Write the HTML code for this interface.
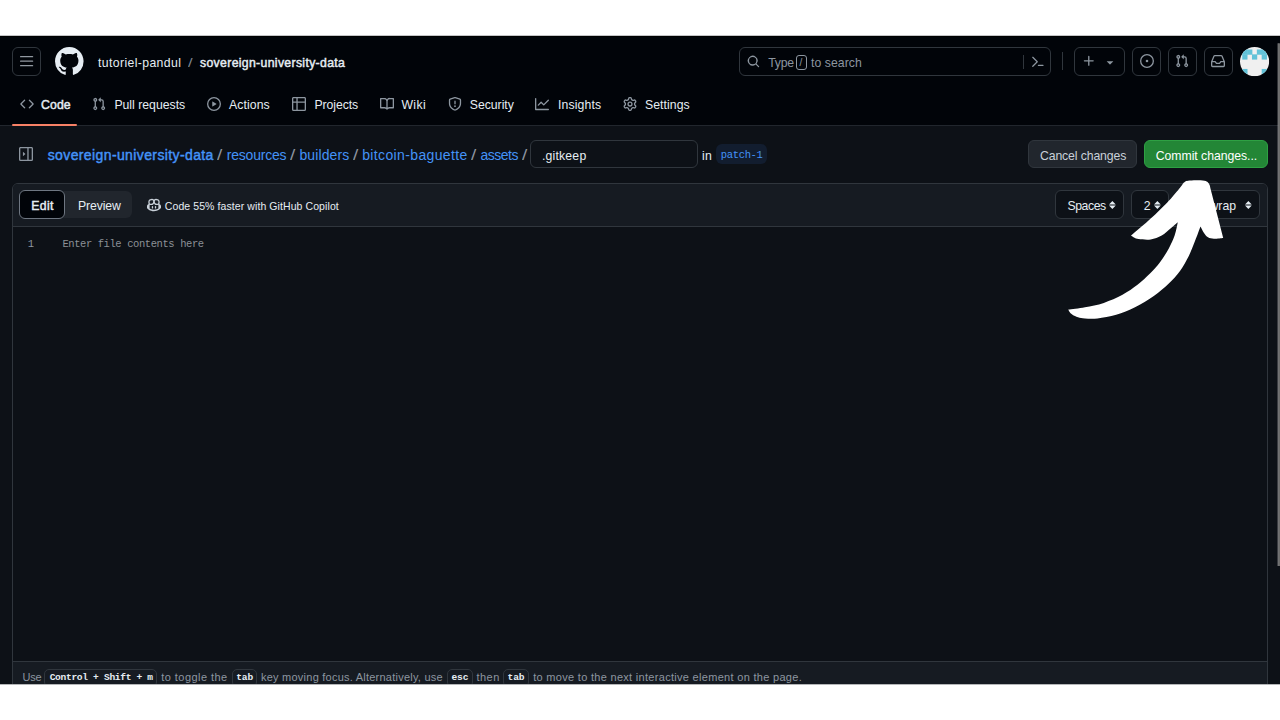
<!DOCTYPE html>
<html lang="en">
<head>
<meta charset="utf-8">
<title>Editing .gitkeep</title>
<style>
*{box-sizing:border-box;margin:0;padding:0}
html,body{width:1280px;height:720px;overflow:hidden;background:#fff}
body{font-family:"Liberation Sans",sans-serif;font-size:12.25px;color:#e6edf3;position:relative}
.t{position:absolute;white-space:nowrap;line-height:16px;display:block}
kbd,code{font-family:inherit}
#page{position:absolute;left:0;top:36px;width:1280px;height:648px;background:#0d1117}
#hdr{position:absolute;left:0;top:36px;width:1280px;height:90px;background:#010409;border-bottom:1px solid #21262d}
.box{position:absolute;border:1px solid #30363d;border-radius:6px}
svg{position:absolute;overflow:visible}
.b{-webkit-text-stroke:0.45px currentColor}
.bc{color:#4493f8;font-size:14px}
.sep{color:#8d96a0;font-size:14px;transform:scaleX(1.35);transform-origin:left}
.m{color:#8d96a0}
.mono{font-family:"Liberation Mono",monospace}
.kbd{position:absolute;border:1px solid #30363d;border-radius:5px;background:#161b22;height:18px;top:669px}
.k{font-family:"Liberation Mono",monospace;font-weight:bold;font-size:9.6px;color:#e6edf3}
.f{color:#8d96a0;font-size:11px}
</style>
</head>
<body>
<div id="page"></div><div id="hdr"></div><div style="position:absolute;left:0;top:36px;width:1280px;height:1px;background:#000"></div>
<header>
<div class="box" style="left:12px;top:47px;width:29px;height:29px"></div>
<svg style="left:19.9px;top:55.8px" width="13.2" height="10.4" viewBox="0 0 13.2 10.4" fill="#9198a1"><rect x="0" y="0" width="13.2" height="1.35" rx=".6"/><rect x="0" y="4.5" width="13.2" height="1.35" rx=".6"/><rect x="0" y="9" width="13.2" height="1.35" rx=".6"/></svg>
<svg style="left:54.7px;top:46.6px" width="28.6" height="28.6" viewBox="0 0 16 16" fill="#e6edf3"><path d="M8 0c4.42 0 8 3.58 8 8a8.013 8.013 0 0 1-5.45 7.59c-.4.08-.55-.17-.55-.38 0-.27.01-1.13.01-2.2 0-.75-.25-1.23-.54-1.48 1.78-.2 3.65-.88 3.65-3.95 0-.88-.31-1.59-.82-2.15.08-.2.36-1.02-.08-2.12 0 0-.67-.22-2.2.82-.64-.18-1.32-.27-2-.27-.68 0-1.36.09-2 .27-1.53-1.03-2.2-.82-2.2-.82-.44 1.1-.16 1.92-.08 2.12-.51.56-.82 1.28-.82 2.15 0 3.06 1.86 3.75 3.64 3.95-.23.2-.44.55-.51 1.07-.46.21-1.61.55-2.33-.66-.15-.24-.6-.83-1.23-.82-.67.01-.27.38.01.53.34.19.73.9.82 1.13.16.45.68 1.31 2.69.94 0 .67.01 1.3.01 1.49 0 .21-.15.45-.55.38A7.995 7.995 0 0 1 0 8c0-4.42 3.58-8 8-8Z"/></svg>
<a class="t " id="h1" style="left:98px;top:55.3px;letter-spacing:0.377px;">tutoriel-pandul</a>
<span class="t " id="h2" style="left:187.8px;top:55.3px;color:#7d8590;transform:scaleX(1.35);transform-origin:left;">/</span>
<a class="t b" id="h3" style="left:200px;top:55.3px;letter-spacing:0.334px;">sovereign-university-data</a>
<div class="box" style="left:739px;top:47px;width:312px;height:29px"></div>
<svg style="left:747px;top:55px" width="13" height="13" viewBox="0 0 16 16" fill="#8d96a0"><path d="M10.68 11.74a6 6 0 0 1-7.922-8.982 6 6 0 0 1 8.982 7.922l3.04 3.04a.749.749 0 0 1-.326 1.275.749.749 0 0 1-.734-.215ZM11.5 7a4.499 4.499 0 1 0-8.997 0A4.499 4.499 0 0 0 11.5 7Z"/></svg>
<span class="t m" id="s1" style="left:768.3px;top:54.5px;letter-spacing:-0.266px;">Type</span>
<div class="box" style="left:796.4px;top:55px;width:11px;height:14.5px;border-radius:3px;border-color:#8d96a0"></div>
<span class="t m" id="s2" style="left:799.5px;top:54.8px;font-size:10px;">/</span>
<span class="t m" id="s3" style="left:811px;top:54.5px;letter-spacing:0.045px;">to search</span>
<div style="position:absolute;left:1022.6px;top:54.6px;width:1px;height:14.2px;background:#30363d"></div>
<svg style="left:1030.6px;top:54.5px" width="13.5" height="13.5" viewBox="0 0 16 16" fill="#8d96a0"><path d="m6.354 8.04-4.773 4.773a.75.75 0 1 0 1.061 1.06L7.945 8.57a.75.75 0 0 0 0-1.06L2.642 2.206a.75.75 0 0 0-1.06 1.061L6.353 8.04ZM8.75 11.5a.75.75 0 0 0 0 1.5h5.5a.75.75 0 0 0 0-1.5h-5.5Z"/></svg>
<div style="position:absolute;left:1062.2px;top:52.4px;width:1px;height:17.6px;background:#30363d"></div>
<div class="box" style="left:1074px;top:47px;width:51px;height:29px"></div>
<svg style="left:1082px;top:54px" width="14" height="14" viewBox="0 0 16 16" fill="#8d96a0"><path d="M7.75 2a.75.75 0 0 1 .75.75V7h4.25a.75.75 0 0 1 0 1.5H8.5v4.25a.75.75 0 0 1-1.5 0V8.5H2.75a.75.75 0 0 1 0-1.5H7V2.75A.75.75 0 0 1 7.75 2Z"/></svg>
<svg style="left:1103px;top:54.5px" width="14" height="14" viewBox="0 0 16 16" fill="#8d96a0"><path d="m4.427 7.427 3.396 3.396a.25.25 0 0 0 .354 0l3.396-3.396A.25.25 0 0 0 11.396 7H4.604a.25.25 0 0 0-.177.427Z"/></svg>
<div class="box" style="left:1132px;top:47px;width:29px;height:29px"></div>
<svg style="left:1139.7px;top:54.3px" width="14" height="14" viewBox="0 0 16 16" fill="#8d96a0"><path d="M8 9.5a1.5 1.5 0 1 0 0-3 1.5 1.5 0 0 0 0 3ZM8 0a8 8 0 1 1 0 16A8 8 0 0 1 8 0ZM1.5 8a6.5 6.5 0 1 0 13 0 6.5 6.5 0 0 0-13 0Z"/></svg>
<div class="box" style="left:1168px;top:47px;width:29px;height:29px"></div>
<svg style="left:1175.3px;top:54.3px" width="14" height="14" viewBox="0 0 16 16" fill="#8d96a0"><path d="M1.5 3.25a2.25 2.25 0 1 1 3 2.122v5.256a2.251 2.251 0 1 1-1.5 0V5.372A2.25 2.25 0 0 1 1.5 3.25Zm5.677-.177L9.573.677A.25.25 0 0 1 10 .854V2.5h1A2.5 2.5 0 0 1 13.5 5v5.628a2.251 2.251 0 1 1-1.5 0V5a1 1 0 0 0-1-1h-1v1.646a.25.25 0 0 1-.427.177L7.177 3.427a.25.25 0 0 1 0-.354ZM3.75 2.5a.75.75 0 1 0 0 1.5.75.75 0 0 0 0-1.5Zm0 9.5a.75.75 0 1 0 0 1.5.75.75 0 0 0 0-1.5Zm8.25.75a.75.75 0 1 0 1.5 0 .75.75 0 0 0-1.5 0Z"/></svg>
<div class="box" style="left:1204px;top:47px;width:29px;height:29px"></div>
<svg style="left:1211.3px;top:54.3px" width="14" height="14" viewBox="0 0 16 16" fill="#8d96a0"><path d="M2.8 2.06A1.75 1.75 0 0 1 4.41 1h7.18c.7 0 1.333.417 1.61 1.06l2.74 6.395c.04.093.06.194.06.295v4.5A1.75 1.75 0 0 1 14.25 15H1.75A1.75 1.75 0 0 1 0 13.25v-4.5c0-.101.02-.202.06-.295Zm1.61.44a.25.25 0 0 0-.23.152L1.887 8H4.75a.75.75 0 0 1 .6.3L6.625 10h2.75l1.275-1.7a.75.75 0 0 1 .6-.3h2.863L11.82 2.652a.25.25 0 0 0-.23-.152Zm10.09 7h-2.875l-1.275 1.7a.75.75 0 0 1-.6.3h-3.5a.75.75 0 0 1-.6-.3L4.375 9.5H1.5v3.75c0 .138.112.25.25.25h12.5a.25.25 0 0 0 .25-.25Z"/></svg>
<svg style="left:1239.5px;top:46.7px" width="29.2" height="29.2" viewBox="0 0 30 30"><defs><clipPath id="avc"><circle cx="15" cy="15" r="15"/></clipPath></defs><g clip-path="url(#avc)"><rect width="30" height="30" fill="#f0f0f0"/><g fill="#62c2d8"><rect x="2.3" y="2.55" width="5.4" height="5.4"/><rect x="7.3" y="2.55" width="5.4" height="5.4"/><rect x="17.3" y="2.55" width="5.4" height="5.4"/><rect x="22.3" y="2.55" width="5.4" height="5.4"/><rect x="2.3" y="7.55" width="5.4" height="5.4"/><rect x="12.3" y="7.55" width="5.4" height="5.4"/><rect x="22.3" y="7.55" width="5.4" height="5.4"/><rect x="2.3" y="22.55" width="5.4" height="5.4"/><rect x="22.3" y="22.55" width="5.4" height="5.4"/></g></g></svg>
<nav>
<svg style="left:19.5px;top:97px" width="14" height="14" viewBox="0 0 16 16" fill="#8d96a0"><path d="m11.28 3.22 4.25 4.25a.75.75 0 0 1 0 1.06l-4.25 4.25a.749.749 0 0 1-1.275-.326.749.749 0 0 1 .215-.734L13.94 8l-3.72-3.72a.749.749 0 0 1 .326-1.275.749.749 0 0 1 .734.215Zm-6.56 0a.751.751 0 0 1 1.042.018.751.751 0 0 1 .018 1.042L2.06 8l3.72 3.72a.749.749 0 0 1-.326 1.275.749.749 0 0 1-.734-.215L.47 8.53a.75.75 0 0 1 0-1.06Z"/></svg>
<a class="t b" id="n0" style="left:41px;top:97.1px;letter-spacing:0.126px;">Code</a>
<svg style="left:92px;top:97px" width="14" height="14" viewBox="0 0 16 16" fill="#8d96a0"><path d="M1.5 3.25a2.25 2.25 0 1 1 3 2.122v5.256a2.251 2.251 0 1 1-1.5 0V5.372A2.25 2.25 0 0 1 1.5 3.25Zm5.677-.177L9.573.677A.25.25 0 0 1 10 .854V2.5h1A2.5 2.5 0 0 1 13.5 5v5.628a2.251 2.251 0 1 1-1.5 0V5a1 1 0 0 0-1-1h-1v1.646a.25.25 0 0 1-.427.177L7.177 3.427a.25.25 0 0 1 0-.354ZM3.75 2.5a.75.75 0 1 0 0 1.5.75.75 0 0 0 0-1.5Zm0 9.5a.75.75 0 1 0 0 1.5.75.75 0 0 0 0-1.5Zm8.25.75a.75.75 0 1 0 1.5 0 .75.75 0 0 0-1.5 0Z"/></svg>
<a class="t " id="n1" style="left:114.4px;top:97.1px;">Pull requests</a>
<svg style="left:206.5px;top:97px" width="14" height="14" viewBox="0 0 16 16" fill="#8d96a0"><path d="M8 0a8 8 0 1 1 0 16A8 8 0 0 1 8 0ZM1.5 8a6.5 6.5 0 1 0 13 0 6.5 6.5 0 0 0-13 0Zm4.879-2.773 4.264 2.559a.25.25 0 0 1 0 .428l-4.264 2.559A.25.25 0 0 1 6 10.559V5.442a.25.25 0 0 1 .379-.215Z"/></svg>
<a class="t " id="n2" style="left:229px;top:97.1px;letter-spacing:0.090px;">Actions</a>
<svg style="left:291.7px;top:97px" width="14" height="14" viewBox="0 0 16 16" fill="#8d96a0"><path d="M0 1.75C0 .784.784 0 1.75 0h12.5C15.216 0 16 .784 16 1.75v12.5A1.75 1.75 0 0 1 14.25 16H1.75A1.75 1.75 0 0 1 0 14.25ZM6.5 6.5v8h7.75a.25.25 0 0 0 .25-.25V6.5Zm8-1.500V1.750a.25.25 0 0 0-.25-.25H6.5V5Zm-13 1.500v7.750c0 .138.112.25.25.25H5v-8ZM5 5V1.500H1.750a.25.25 0 0 0-.25.25V5Z"/></svg>
<a class="t " id="n3" style="left:314.4px;top:97.1px;letter-spacing:-0.071px;">Projects</a>
<svg style="left:379.5px;top:97px" width="14" height="14" viewBox="0 0 16 16" fill="#8d96a0"><path d="M0 1.75A.75.75 0 0 1 .75 1h4.253c1.227 0 2.317.59 3 1.501A3.743 3.743 0 0 1 11.006 1h4.245a.75.75 0 0 1 .75.75v10.5a.75.75 0 0 1-.75.75h-4.507a2.25 2.25 0 0 0-1.591.659l-.622.621a.75.75 0 0 1-1.060 0l-.622-.621A2.25 2.25 0 0 0 5.258 13H.75a.75.75 0 0 1-.75-.75Zm7.251 10.324.004-5.073-.002-2.253A2.25 2.25 0 0 0 5.003 2.5H1.5v9h3.757a3.750 3.750 0 0 1 1.994.574ZM8.755 4.75l-.004 7.322a3.752 3.752 0 0 1 1.992-.572H14.5v-9h-3.495a2.25 2.25 0 0 0-2.250 2.250Z"/></svg>
<a class="t " id="n4" style="left:401.4px;top:97.1px;letter-spacing:0.390px;">Wiki</a>
<svg style="left:447.6px;top:97px" width="14" height="14" viewBox="0 0 16 16" fill="#8d96a0"><path d="M7.467.133a1.748 1.748 0 0 1 1.066 0l5.25 1.68A1.75 1.75 0 0 1 15 3.48V7c0 1.566-.32 3.182-1.303 4.682-.983 1.498-2.585 2.813-5.032 3.855a1.697 1.697 0 0 1-1.33 0c-2.447-1.042-4.049-2.357-5.032-3.855C1.32 10.182 1 8.566 1 7V3.48a1.75 1.75 0 0 1 1.217-1.667Zm.61 1.429a.25.25 0 0 0-.153 0l-5.25 1.68a.25.25 0 0 0-.174.238V7c0 1.358.275 2.666 1.057 3.86.784 1.194 2.121 2.34 4.366 3.297a.196.196 0 0 0 .154 0c2.245-.956 3.582-2.104 4.366-3.298C13.225 9.666 13.5 8.36 13.5 7V3.48a.251.251 0 0 0-.174-.237l-5.25-1.68ZM8.75 4.75v3a.75.75 0 0 1-1.5 0v-3a.75.75 0 0 1 1.5 0ZM9 10.5a1 1 0 1 1-2 0 1 1 0 0 1 2 0Z"/></svg>
<a class="t " id="n5" style="left:469.8px;top:97.1px;letter-spacing:-0.033px;">Security</a>
<svg style="left:534.8px;top:97px" width="14" height="14" viewBox="0 0 16 16" fill="#8d96a0"><path d="M1.5 1.75V13.5h13.75a.75.75 0 0 1 0 1.5H.75a.75.75 0 0 1-.75-.75V1.75a.75.75 0 0 1 1.5 0Zm14.28 2.53-5.25 5.25a.75.75 0 0 1-1.06 0L7 7.06 4.28 9.78a.751.751 0 0 1-1.042-.018.751.751 0 0 1-.018-1.042l3.25-3.25a.75.75 0 0 1 1.06 0L10 7.94l4.72-4.72a.751.751 0 0 1 1.042.018.751.751 0 0 1 .018 1.042Z"/></svg>
<a class="t " id="n6" style="left:558px;top:97.1px;letter-spacing:0.135px;">Insights</a>
<svg style="left:622.6px;top:97px" width="14" height="14" viewBox="0 0 16 16" fill="#8d96a0"><path d="M8 0a8.2 8.2 0 0 1 .701.031C9.444.095 9.99.645 10.16 1.29l.288 1.107c.018.066.079.158.212.224.231.114.454.243.668.386.123.082.233.09.299.071l1.103-.303c.644-.176 1.392.021 1.82.63.27.385.506.792.704 1.218.315.675.111 1.422-.364 1.891l-.814.806c-.049.048-.098.147-.088.294.016.257.016.515 0 .772-.01.147.038.246.088.294l.814.806c.475.469.679 1.216.364 1.891a7.977 7.977 0 0 1-.704 1.217c-.428.61-1.176.807-1.82.63l-1.102-.302c-.067-.019-.177-.011-.3.071a5.909 5.909 0 0 1-.668.386c-.133.066-.194.158-.211.224l-.29 1.106c-.168.646-.715 1.196-1.458 1.26a8.006 8.006 0 0 1-1.402 0c-.743-.064-1.289-.614-1.458-1.26l-.289-1.106c-.018-.066-.079-.158-.212-.224a5.738 5.738 0 0 1-.668-.386c-.123-.082-.233-.09-.299-.071l-1.103.303c-.644.176-1.392-.021-1.82-.63a8.12 8.12 0 0 1-.704-1.218c-.315-.675-.111-1.422.363-1.891l.815-.806c.05-.048.098-.147.088-.294a6.214 6.214 0 0 1 0-.772c.01-.147-.038-.246-.088-.294l-.815-.806C.635 6.045.431 5.298.746 4.623a7.92 7.92 0 0 1 .704-1.217c.428-.61 1.176-.807 1.82-.63l1.102.302c.067.019.177.011.3-.071.214-.143.437-.272.668-.386.133-.066.194-.158.211-.224l.29-1.106C6.009.645 6.556.095 7.299.03 7.53.01 7.764 0 8 0Zm-.571 1.525c-.036.003-.108.036-.137.146l-.289 1.105c-.147.561-.549.967-.998 1.189-.173.086-.34.183-.5.29-.417.278-.97.423-1.529.27l-1.103-.303c-.109-.03-.175.016-.195.045-.22.312-.412.644-.573.99-.014.031-.021.11.059.19l.815.806c.411.406.562.957.53 1.456a4.709 4.709 0 0 0 0 .582c.032.499-.119 1.05-.53 1.456l-.815.806c-.081.08-.073.159-.059.19.162.346.353.677.573.989.02.03.085.076.195.046l1.102-.303c.56-.153 1.113-.008 1.53.27.161.107.328.204.501.29.447.222.85.629.997 1.189l.289 1.105c.029.109.101.143.137.146a6.6 6.6 0 0 0 1.142 0c.036-.003.108-.036.137-.146l.289-1.105c.147-.561.549-.967.998-1.189.173-.086.34-.183.5-.29.417-.278.97-.423 1.529-.27l1.103.303c.109.029.175-.016.195-.045.22-.313.411-.644.573-.99.014-.031.021-.11-.059-.19l-.815-.806c-.411-.406-.562-.957-.53-1.456a4.709 4.709 0 0 0 0-.582c-.032-.499.119-1.05.53-1.456l.815-.806c.081-.08.073-.159.059-.19a6.464 6.464 0 0 0-.573-.989c-.02-.03-.085-.076-.195-.046l-1.102.303c-.56.153-1.113.008-1.53-.27a4.44 4.44 0 0 0-.501-.29c-.447-.222-.85-.629-.997-1.189l-.289-1.105c-.029-.11-.101-.143-.137-.146a6.6 6.6 0 0 0-1.142 0ZM11 8a3 3 0 1 1-6 0 3 3 0 0 1 6 0ZM9.5 8a1.5 1.5 0 1 0-3.001.001A1.5 1.5 0 0 0 9.500 8Z"/></svg>
<a class="t " id="n7" style="left:645px;top:97.1px;letter-spacing:0.067px;">Settings</a>
<div style="position:absolute;left:12px;top:124px;width:65px;height:2px;background:#f78166;border-radius:2px"></div>
</nav>
</header>
<main>
<svg style="left:19.3px;top:147px" width="14" height="14" viewBox="0 0 16 16" fill="#8d96a0"><path d="M0 1.75C0 .784.784 0 1.75 0h12.5C15.216 0 16 .784 16 1.75v12.5A1.75 1.75 0 0 1 14.25 16H1.75A1.75 1.75 0 0 1 0 14.25Zm1.75-.25a.25.25 0 0 0-.25.25v12.5c0 .138.112.25.25.25H9.5v-13Zm12.5 13a.25.25 0 0 0 .25-.25V1.75a.25.25 0 0 0-.25-.25H11v13ZM4.5 5.35 7.4 8 4.5 10.65Z"/></svg>
<a class="t bc b" id="b0" style="left:47.7px;top:147.1px;letter-spacing:0.388px;">sovereign-university-data</a>
<span class="t sep" id="b1" style="left:217px;top:147.1px;">/</span>
<a class="t bc" id="b2" style="left:226.7px;top:147.1px;letter-spacing:-0.197px;">resources</a>
<span class="t sep" id="b3" style="left:290px;top:147.1px;">/</span>
<a class="t bc" id="b4" style="left:299.4px;top:147.1px;letter-spacing:0.121px;">builders</a>
<span class="t sep" id="b5" style="left:352.5px;top:147.1px;">/</span>
<a class="t bc" id="b6" style="left:362.2px;top:147.1px;letter-spacing:0.366px;">bitcoin-baguette</a>
<span class="t sep" id="b7" style="left:471px;top:147.1px;">/</span>
<a class="t bc" id="b8" style="left:480.5px;top:147.1px;letter-spacing:-0.495px;">assets</a>
<span class="t sep" id="b9" style="left:521.5px;top:147.1px;">/</span>
<div class="box" style="left:530px;top:140px;width:168px;height:28px;background:#0d1117"></div>
<span class="t " id="fn" style="left:541.9px;top:148.2px;letter-spacing:0.199px;">.gitkeep</span>
<span class="t " id="in" style="left:702px;top:148.2px;letter-spacing:0.327px;">in</span>
<div style="position:absolute;left:716px;top:144px;width:51px;height:20px;border-radius:6px;background:#121d2f"></div>
<code class="t mono" id="pt" style="left:720.8px;top:147.2px;font-size:10.5px;color:#4493f8;letter-spacing:-0.344px;">patch-1</code>
<div class="box" style="left:1028px;top:140px;width:109px;height:28px;background:#21262d"></div>
<span class="t " id="cc" style="left:1040px;top:148.2px;color:#c9d1d9;letter-spacing:-0.119px;">Cancel changes</span>
<div class="box" style="left:1144px;top:140px;width:124px;height:28px;background:#238636;border-color:#2ea043"></div>
<span class="t " id="cm" style="left:1155.8px;top:148.2px;color:#fff;letter-spacing:-0.043px;">Commit changes...</span>
<section>
<div class="box" style="left:12px;top:183px;width:1256px;height:520px;background:#0d1117"></div>
<div style="position:absolute;left:13px;top:184px;width:1254px;height:43px;background:#161b22;border-bottom:1px solid #30363d;border-radius:5px 5px 0 0"></div>
<div style="position:absolute;left:19px;top:191px;width:113px;height:27px;background:#21262d;border-radius:6px"></div>
<div class="box" style="left:19px;top:190px;width:45.500px;height:29px;background:#010409;border-color:#6e7681"></div>
<span class="t b" id="ed" style="left:31.2px;top:198.3px;letter-spacing:0.373px;">Edit</span>
<span class="t " id="pv" style="left:78px;top:198.3px;letter-spacing:-0.111px;">Preview</span>
<svg style="left:147px;top:198px" width="14" height="14" viewBox="0 0 16 16" fill="#c9d1d9"><path d="M7.998 15.035c-4.562 0-7.873-2.914-7.998-3.749V9.338c.085-.628.677-1.686 1.588-2.065.013-.07.024-.143.036-.218.029-.183.06-.384.126-.612-.201-.508-.254-1.084-.254-1.656 0-.87.128-1.769.693-2.484.579-.733 1.494-1.124 2.724-1.261 1.206-.134 2.262.034 2.944.765.05.053.096.108.139.165.044-.057.094-.112.143-.165.682-.731 1.738-.899 2.944-.765 1.23.137 2.145.528 2.724 1.261.566.715.693 1.614.693 2.484 0 .572-.053 1.148-.254 1.656.066.228.098.429.126.612.012.076.024.148.037.218.924.385 1.522 1.471 1.591 2.095v1.872c0 .766-3.351 3.795-8.002 3.795Zm0-1.485c2.28 0 4.584-1.11 5.002-1.433V7.862l-.023-.116c-.49.21-1.075.291-1.727.291-1.146 0-2.059-.327-2.71-.991A3.222 3.222 0 0 1 8 6.303a3.240 3.240 0 0 1-.544.743c-.65.664-1.563.991-2.71.991-.652 0-1.236-.081-1.727-.291l-.023.116v4.255c.419.323 2.722 1.433 5.002 1.433ZM6.762 2.83c-.193-.206-.637-.413-1.682-.297-1.019.113-1.479.404-1.713.7-.247.312-.369.789-.369 1.554 0 .793.129 1.171.308 1.371.162.181.519.379 1.442.379.853 0 1.339-.235 1.638-.54.315-.322.527-.827.617-1.553.117-.935-.037-1.395-.241-1.614Zm4.155-.297c-1.044-.116-1.488.091-1.681.297-.204.219-.359.679-.242 1.614.091.726.303 1.231.618 1.553.299.305.784.54 1.638.54.922 0 1.28-.198 1.442-.379.179-.2.308-.578.308-1.371 0-.765-.123-1.242-.37-1.554-.233-.296-.693-.587-1.713-.7ZM6.25 9.037a.75.75 0 0 1 .75.75v1.501a.75.75 0 0 1-1.5 0V9.787a.75.75 0 0 1 .75-.75Zm4.25.75v1.501a.75.75 0 0 1-1.5 0V9.787a.75.75 0 0 1 1.5 0Z"/></svg>
<span class="t " id="cp" style="left:164.8px;top:198.2px;font-size:10.5px;letter-spacing:0.086px;">Code 55% faster with GitHub Copilot</span>
<div class="box" style="left:1055px;top:190px;width:69px;height:29px;background:#0d1117"></div>
<span class="t " id="sp" style="left:1067.4px;top:198.3px;letter-spacing:-0.410px;">Spaces</span>
<svg style="left:1108.8px;top:201.1px" width="6.75" height="8.1" viewBox="0 0 6.75 8.1" fill="#e6edf3"><path d="M0 3.600 3.375 0 6.75 3.600ZM0 4.500 3.375 8.1 6.75 4.500Z"/></svg>
<div class="box" style="left:1131px;top:190px;width:38px;height:29px;background:#0d1117"></div>
<span class="t " id="tw" style="left:1143.7px;top:198.3px;">2</span>
<svg style="left:1154px;top:201.1px" width="6.75" height="8.1" viewBox="0 0 6.75 8.1" fill="#e6edf3"><path d="M0 3.600 3.375 0 6.75 3.600ZM0 4.500 3.375 8.1 6.75 4.500Z"/></svg>
<div class="box" style="left:1176px;top:190px;width:84px;height:29px;background:#0d1117"></div>
<span class="t " id="nw" style="left:1190.4px;top:198.3px;">No wrap</span>
<svg style="left:1245px;top:201.1px" width="6.75" height="8.1" viewBox="0 0 6.75 8.1" fill="#e6edf3"><path d="M0 3.600 3.375 0 6.75 3.600ZM0 4.500 3.375 8.1 6.75 4.500Z"/></svg>
<code class="t mono" id="ln" style="left:27.75px;top:236px;font-size:10.5px;color:#8d96a0;letter-spacing:-0.463px;">1</code>
<code class="t mono" id="ph" style="left:62.4px;top:236px;font-size:10.5px;color:#8b9096;letter-spacing:-0.414px;">Enter file contents here</code>
<footer>
<div style="position:absolute;left:13px;top:661px;width:1254px;height:30px;background:#161b22;border-top:1px solid #30363d"></div>
<span class="t f" id="f1" style="left:22.5px;top:669px;letter-spacing:-0.254px;">Use</span>
<div class="kbd" style="left:44.4px;width:113.1px"></div>
<kbd class="t k" id="k1" style="left:49.7px;top:670.4px;letter-spacing:-0.331px;">Control + Shift + m</kbd>
<span class="t f" id="f2" style="left:161.2px;top:669px;letter-spacing:0.457px;">to toggle the</span>
<div class="kbd" style="left:231.5px;width:25.5px"></div>
<kbd class="t k" id="k2" style="left:236.3px;top:670.4px;letter-spacing:-0.194px;">tab</kbd>
<span class="t f" id="f3" style="left:261px;top:669px;letter-spacing:0.235px;">key moving focus. Alternatively, use</span>
<div class="kbd" style="left:446.5px;width:26.2px"></div>
<kbd class="t k" id="k3" style="left:451.5px;top:670.4px;letter-spacing:-0.194px;">esc</kbd>
<span class="t f" id="f4" style="left:476.4px;top:669px;letter-spacing:0.495px;">then</span>
<div class="kbd" style="left:502.6px;width:26.1px"></div>
<kbd class="t k" id="k4" style="left:507.6px;top:670.4px;letter-spacing:-0.194px;">tab</kbd>
<span class="t f" id="f5" style="left:533.2px;top:669px;letter-spacing:0.301px;">to move to the next interactive element on the page.</span>
</footer>
</section>
</main>
<svg style="left:0;top:0" width="1280" height="720"><rect x="1277.7" y="43.3" width="1" height="522.7" fill="#a6a6a6"/><rect x="1278.600" y="43.3" width="1.4" height="522.7" fill="#6c6c6c"/></svg>

<svg style="left:0;top:0" width="1280" height="720" viewBox="0 0 1280 720"><path fill="#fff" d="M1068.3 309.6 C1068.5 310.1 1069.1 311.4 1069.8 312.3 C1070.5 313.2 1071.1 313.9 1072.5 314.8 C1073.9 315.6 1075.9 316.6 1078.0 317.2 C1080.1 317.8 1081.8 318.3 1085.0 318.5 C1088.2 318.7 1092.3 319.1 1097.5 318.5 C1102.7 317.9 1110.0 316.6 1116.2 314.8 C1122.5 312.9 1128.8 310.4 1135.0 307.2 C1141.2 304.1 1148.1 300.0 1153.8 296.0 C1159.4 292.0 1164.4 287.7 1168.8 283.5 C1173.1 279.3 1176.7 275.6 1180.0 271.0 C1183.3 266.4 1186.2 261.0 1188.8 256.0 C1191.2 251.0 1193.0 245.9 1195.0 241.0 C1197.0 236.1 1199.6 228.9 1200.5 226.5 C1201.1 227.6 1202.8 231.2 1204.0 233.0 C1205.2 234.8 1206.3 236.3 1208.0 237.3 C1209.7 238.3 1211.5 238.7 1214.0 238.8 C1216.5 238.9 1221.7 238.1 1223.2 238.0 L1210.6 189.0 C1210.4 188.3 1210.1 186.1 1209.6 185.0 C1209.1 183.9 1208.6 183.0 1207.8 182.3 C1207.0 181.6 1206.5 181.0 1204.5 180.7 C1202.5 180.3 1198.8 180.2 1196.0 180.2 C1193.2 180.2 1189.8 180.5 1188.0 180.7 C1186.2 180.9 1186.1 181.2 1185.3 181.6 C1184.5 182.0 1183.6 183.0 1183.3 183.3 C1182.8 184.0 1182.1 185.1 1180.0 187.7 C1177.9 190.3 1173.5 195.6 1170.8 198.7 C1168.0 201.8 1166.1 203.6 1163.5 206.2 C1160.9 208.8 1158.1 211.8 1155.2 214.5 C1152.3 217.2 1149.1 220.0 1146.1 222.7 C1143.0 225.4 1139.4 228.3 1136.9 230.5 C1134.4 232.7 1132.0 234.8 1131.0 235.6 C1131.6 236.0 1133.2 237.2 1134.5 237.8 C1135.8 238.4 1136.0 238.8 1138.7 239.1 C1141.4 239.4 1146.9 240.1 1150.7 239.5 C1154.5 238.9 1158.4 237.5 1161.7 235.6 C1165.0 233.7 1168.1 230.4 1170.8 228.2 C1173.5 226.0 1176.6 223.2 1177.8 222.2 C1177.3 224.4 1176.2 230.9 1174.7 235.3 C1173.2 239.7 1171.2 244.0 1168.8 248.5 C1166.3 253.0 1163.1 258.1 1160.0 262.2 C1156.9 266.4 1153.8 269.8 1150.0 273.5 C1146.2 277.2 1142.1 281.2 1137.5 284.8 C1132.9 288.3 1128.1 291.7 1122.5 294.8 C1116.9 297.8 1110.0 300.8 1103.8 302.9 C1097.5 305.0 1090.9 306.1 1085.0 307.2 C1079.1 308.4 1071.1 309.2 1068.3 309.6 Z"/></svg>
<div style="position:absolute;left:0;top:0;width:1280px;height:36px;background:#fff;border-bottom:1px solid #c4c5c7"></div><div style="position:absolute;left:0;top:684px;width:1280px;height:36px;background:#fff;border-top:1px solid #b4b6b8"></div>
</body>
</html>
